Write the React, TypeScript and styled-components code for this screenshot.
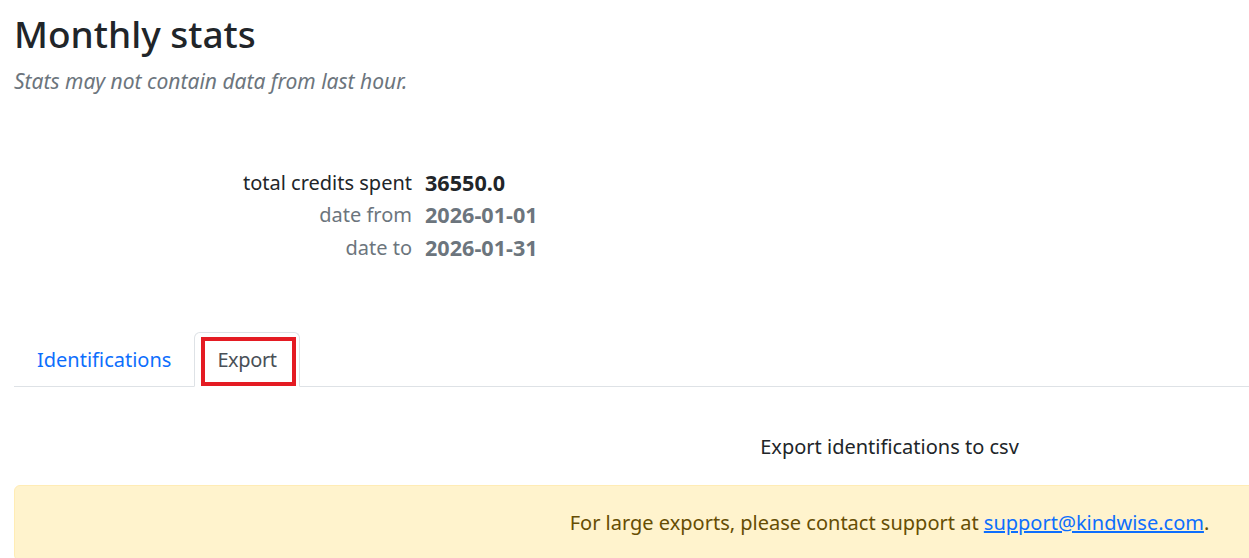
import { FC, Fragment } from 'react'
import styled, { createGlobalStyle } from 'styled-components'

const GlobalStyle = createGlobalStyle`
  html, body {
    margin: 0;
    padding: 0;
    background: #fff;
    overflow: hidden;
  }
  body {
    font-family: 'Noto Sans', 'Open Sans', sans-serif;
    color: #212529;
    font-size: 20px;
    line-height: 1.5;
  }
`

const Page = styled.main`
  width: 1779px;
  box-sizing: border-box;
  padding: 12px 14px 0;
`

const Title = styled.h1`
  margin: 0;
  font-size: 37px;
  font-weight: 500;
  line-height: 1.2;
  color: #212529;
`

const Subtitle = styled.p`
  margin: 10px 0 0;
  font-size: 21px;
  font-style: italic;
  color: #6c757d;
`

const StatsTable = styled.dl`
  display: grid;
  grid-template-columns: 398px auto;
  column-gap: 13px;
  row-gap: 2.5px;
  margin: 70px 0 0;
  line-height: 30px;
`

const StatLabel = styled.dt<{ $muted?: boolean }>`
  text-align: right;
  font-size: 20px;
  color: ${(p) => (p.$muted ? '#6c757d' : '#212529')};
`

const StatValue = styled.dd<{ $muted?: boolean }>`
  margin: 0;
  font-size: 21.6px;
  font-weight: 700;
  color: ${(p) => (p.$muted ? '#6c757d' : '#212529')};
`

const Tabs = styled.ul`
  display: flex;
  list-style: none;
  margin: 69px 0 0;
  padding: 0;
  border-bottom: 1px solid #dee2e6;
`

const Tab = styled.li<{ $active?: boolean }>`
  position: relative;
  margin-bottom: -1px;
  padding: 12px 22px 11px;
  font-size: 20px;
  line-height: 30px;
  border: 1px solid ${(p) => (p.$active ? '#dee2e6' : 'transparent')};
  border-bottom-color: ${(p) => (p.$active ? '#fff' : 'transparent')};
  border-radius: 6px 6px 0 0;
  background: ${(p) => (p.$active ? '#fff' : 'transparent')};
  color: ${(p) => (p.$active ? '#495057' : '#0d6efd')};
  cursor: pointer;
`

const TabLabel = styled.span<{ $tight?: boolean }>`
  letter-spacing: ${(p) => (p.$tight ? '-0.4px' : 'normal')};
`

/* red annotation frame drawn over the active tab */
const Highlight = styled.span`
  position: absolute;
  left: 6px;
  right: 3px;
  top: 4px;
  bottom: 0;
  border: 4px solid #e41b23;
  pointer-events: none;
`

const ExportHeading = styled.p`
  margin: 45px 0 0;
  text-align: center;
  font-size: 20px;
  line-height: 30px;
`

const Alert = styled.div`
  margin-top: 23px;
  padding: 22px 16px;
  background: #fff3cd;
  border: 1px solid #ffecb5;
  border-radius: 6px;
  color: #664d03;
  text-align: center;
  font-size: 20px;
  line-height: 30px;
`

const AlertLink = styled.a`
  color: #0d6efd;
  text-decoration: underline;
`

const stats = [
  { label: 'total credits spent', value: '36550.0', muted: false },
  { label: 'date from', value: '2026-01-01', muted: true },
  { label: 'date to', value: '2026-01-31', muted: true },
]

const App: FC = () => {
  return (
    <>
      <GlobalStyle />
      <Page>
        <Title>Monthly stats</Title>
        <Subtitle>Stats may not contain data from last hour.</Subtitle>
        <StatsTable>
          {stats.map((s) => (
            <Fragment key={s.label}>
              <StatLabel $muted={s.muted}>{s.label}</StatLabel>
              <StatValue $muted={s.muted}>{s.value}</StatValue>
            </Fragment>
          ))}
        </StatsTable>
        <Tabs>
          <Tab>
            <TabLabel>Identifications</TabLabel>
          </Tab>
          <Tab $active>
            <TabLabel $tight>Export</TabLabel>
            <Highlight />
          </Tab>
        </Tabs>
        <ExportHeading>Export identifications to csv</ExportHeading>
        <Alert>
          For large exports, please contact support at{' '}
          <AlertLink href="mailto:support@kindwise.com">support@kindwise.com</AlertLink>.
        </Alert>
      </Page>
    </>
  )
}

export default App
